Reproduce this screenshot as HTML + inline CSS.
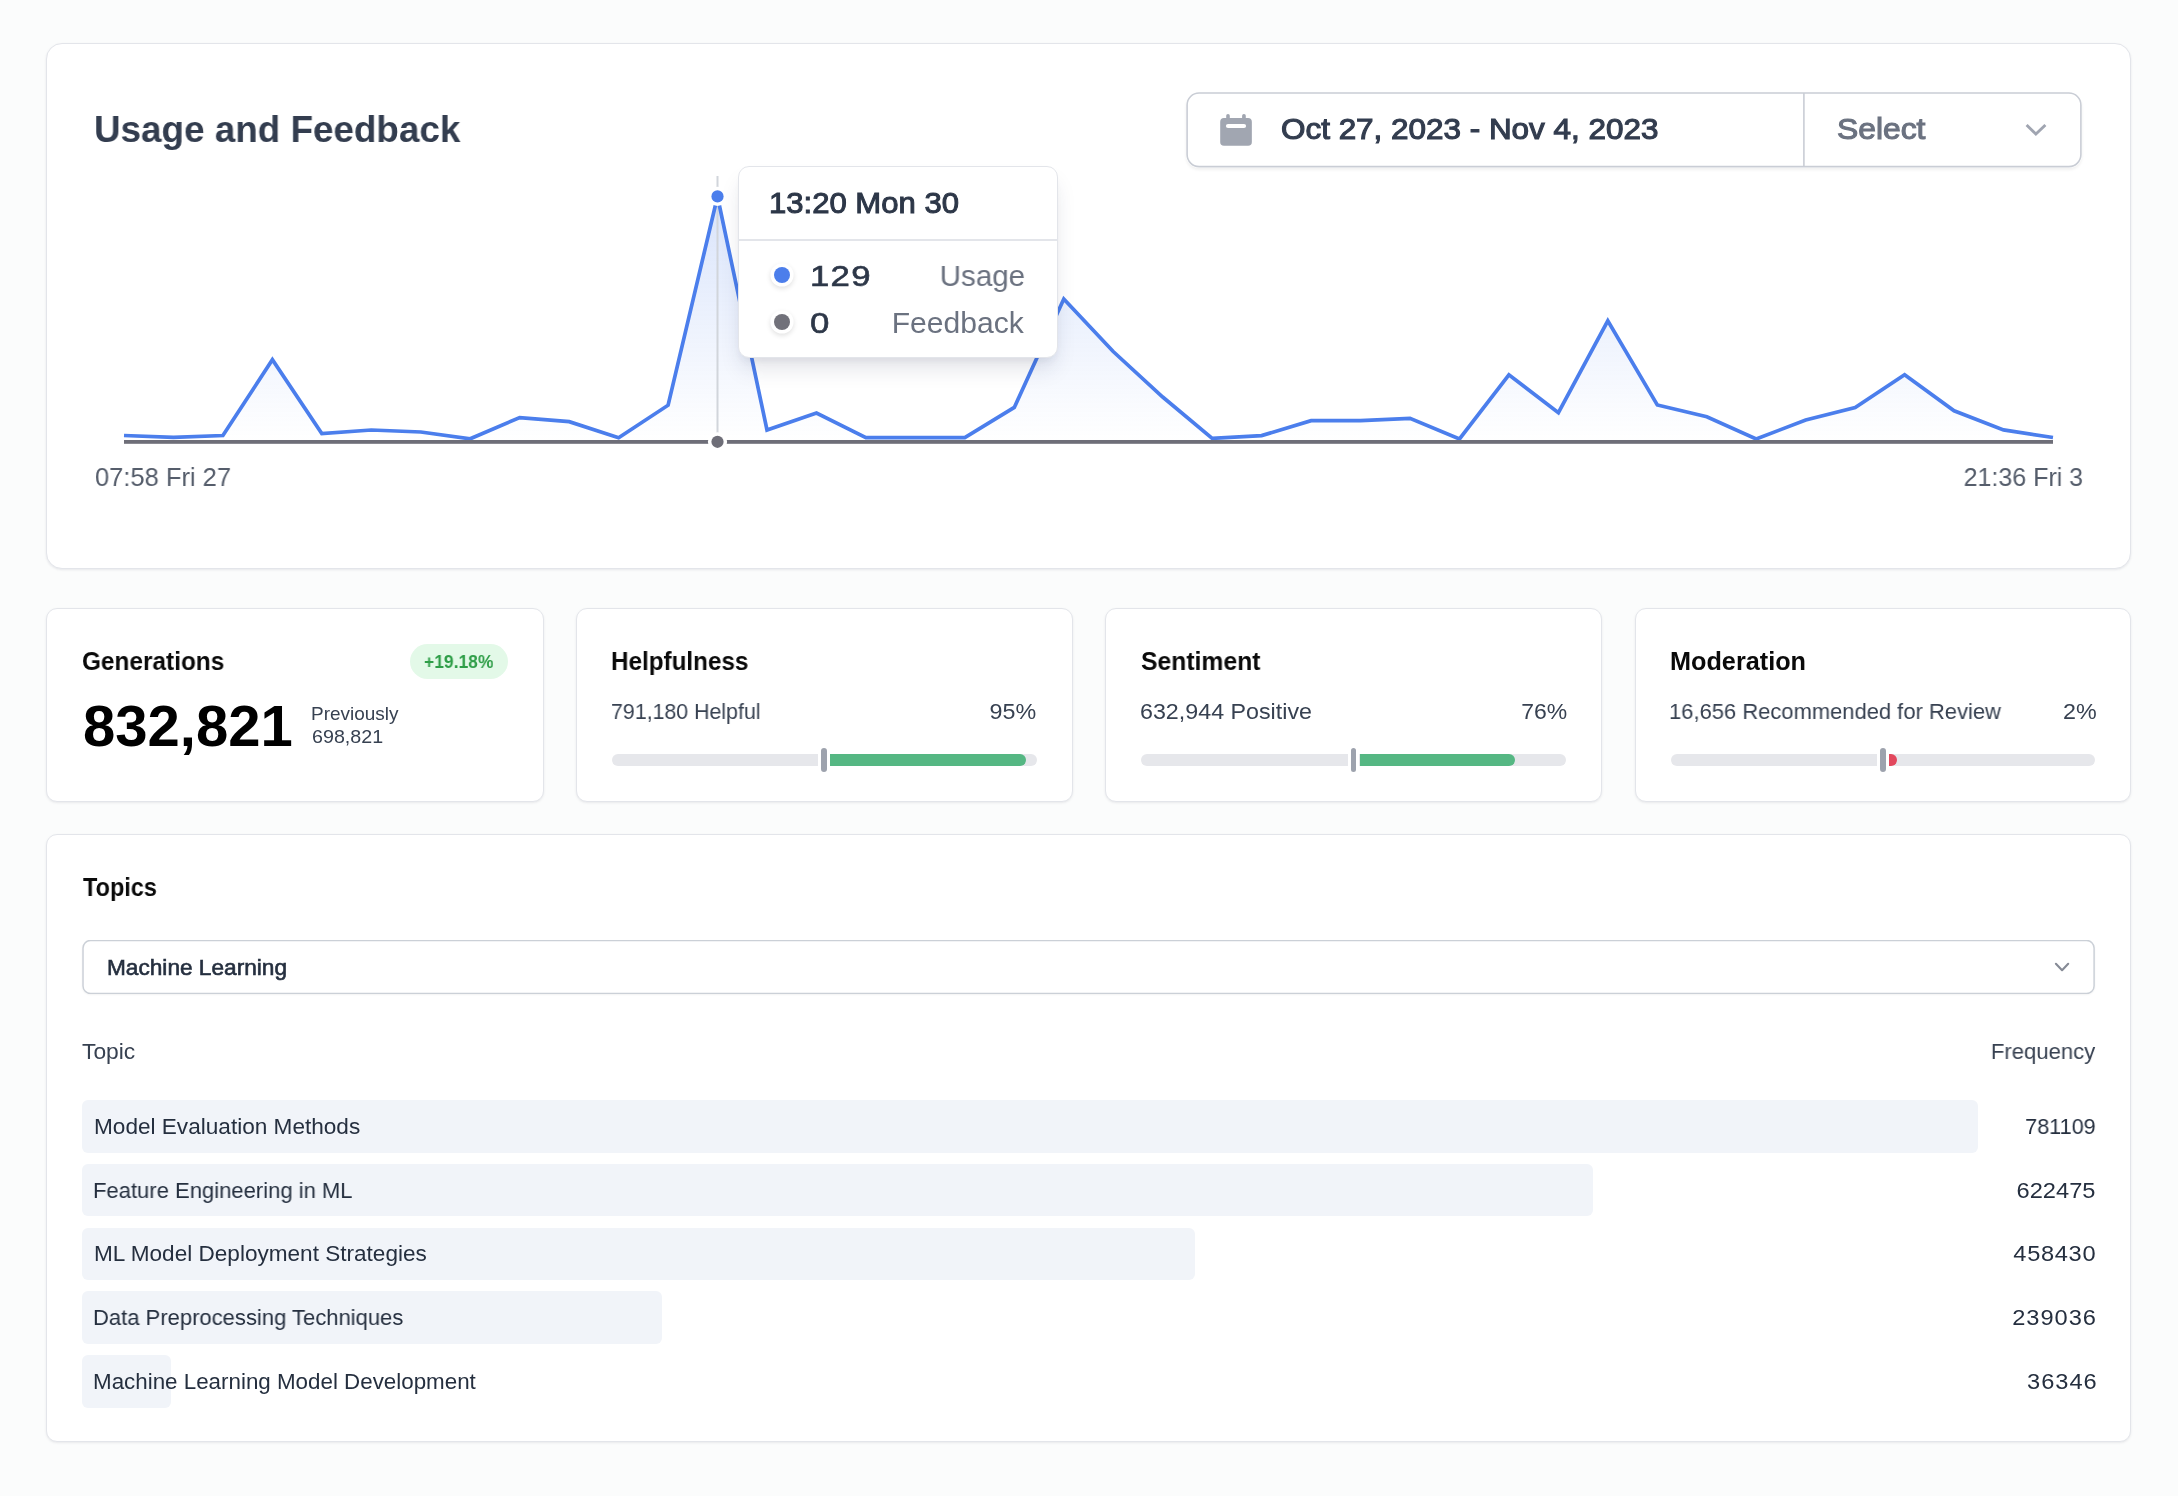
<!DOCTYPE html>
<html lang="en"><head><meta charset="utf-8"><title>Usage and Feedback</title>
<style>
*{box-sizing:border-box;margin:0;padding:0}
html,body{width:2178px;height:1496px;overflow:hidden}
body{background:#fbfcfc;font-family:"Liberation Sans", Arial, Helvetica, sans-serif;position:relative;-webkit-font-smoothing:antialiased}
.t{display:block;will-change:transform}
.in{position:absolute;width:2178px;height:1496px;pointer-events:none}
.card{position:absolute;background:#fff;border:1px solid #e3e5ea;box-shadow:0 1px 3px rgba(30,40,70,.06),0 1px 2px rgba(30,40,70,.035)}
.picker{position:absolute;left:1186px;top:92px;width:896px;height:75.6px;border-radius:13px;background:#fff;box-shadow:0 2px 3px rgba(0,0,0,.06)}
.tooltip{position:absolute;background:#fff;border:1px solid #e3e5ea;border-radius:11px;box-shadow:0 14px 22px -4px rgba(30,40,80,.13),0 5px 8px -3px rgba(30,40,80,.08)}
.tooltip .hr{position:absolute;height:1.6px;background:#e3e5ea}
.dot{position:absolute;width:16px;height:16px;border-radius:50%;box-shadow:0 0 0 3.6px #fff,0 2px 5px 3.6px rgba(0,0,0,.12)}
.badgebg{position:absolute;left:410px;top:644px;width:97.8px;height:34.8px;border-radius:18px;background:#e3f9e8}
.track{position:absolute;top:754.2px;height:11.6px;border-radius:6px;background:#e6e7eb}
.fill{position:absolute;top:754.2px;height:11.6px;border-radius:0 6px 6px 0}
.marker{position:absolute;top:745.4px;width:11.6px;height:29.2px;border:3px solid #fff;border-radius:6px;background:#9da2ad}
.selbox{position:absolute;left:82px;top:940px;width:2013px;height:54px;border-radius:8.5px;background:#fff;box-shadow:0 1px 2px rgba(0,0,0,.05)}
.bar{position:absolute;left:82.4px;height:52.4px;border-radius:6px;background:#f1f4f9}
</style></head>
<body>
<main>
<section class="card" aria-label="Usage and Feedback" style="left:46px;top:43px;width:2085px;height:526px;border-radius:16px"><div class="in" style="left:-47px;top:-44px">
<h1 id="title" class="t" style="position:absolute;top:110.80px;font-size:37.8px;line-height:1;font-weight:700;color:#333d4f;white-space:nowrap;transform:scaleX(0.9743);transform-origin:left center;left:94.27px;">Usage and Feedback</h1>
<svg class="chart" width="2178" height="600" viewBox="0 0 2178 600" style="position:absolute;left:0;top:0;overflow:visible">
<defs><linearGradient id="ag" x1="0" y1="196" x2="0" y2="442" gradientUnits="userSpaceOnUse"><stop offset="0" stop-color="#4b7eec" stop-opacity="0.21"/><stop offset="1" stop-color="#4b7eec" stop-opacity="0"/></linearGradient></defs>
<path d="M124.0,441.8 L124.0,435.5 L173.5,437.4 L222.9,435.5 L272.4,359.7 L321.8,433.5 L371.3,430.0 L420.8,432.0 L470.2,438.8 L519.7,417.6 L569.2,421.7 L618.6,437.7 L668.1,405.2 L717.5,196.5 L767.0,430.0 L816.5,413.0 L865.9,437.7 L915.4,437.7 L964.8,437.7 L1014.3,407.4 L1063.8,299.0 L1113.2,351.5 L1162.7,397.0 L1212.2,438.3 L1261.6,435.6 L1311.1,420.7 L1360.5,420.7 L1410.0,418.4 L1459.5,439.0 L1508.9,374.8 L1558.4,412.7 L1607.8,320.8 L1657.3,405.0 L1706.8,416.8 L1756.2,439.0 L1805.7,420.0 L1855.2,407.6 L1904.6,374.8 L1954.1,410.8 L2003.5,429.9 L2053.0,437.5 L2053.0,441.8 Z" fill="url(#ag)"/>
<line x1="717.5" y1="176" x2="717.5" y2="441" stroke="#d1d5db" stroke-width="2"/>
<polyline points="124.0,435.5 173.5,437.4 222.9,435.5 272.4,359.7 321.8,433.5 371.3,430.0 420.8,432.0 470.2,438.8 519.7,417.6 569.2,421.7 618.6,437.7 668.1,405.2 717.5,196.5 767.0,430.0 816.5,413.0 865.9,437.7 915.4,437.7 964.8,437.7 1014.3,407.4 1063.8,299.0 1113.2,351.5 1162.7,397.0 1212.2,438.3 1261.6,435.6 1311.1,420.7 1360.5,420.7 1410.0,418.4 1459.5,439.0 1508.9,374.8 1558.4,412.7 1607.8,320.8 1657.3,405.0 1706.8,416.8 1756.2,439.0 1805.7,420.0 1855.2,407.6 1904.6,374.8 1954.1,410.8 2003.5,429.9 2053.0,437.5" fill="none" stroke="#4b7eec" stroke-width="3.7" stroke-linejoin="miter" stroke-miterlimit="4"/>
<rect x="124.0" y="440" width="1929.0" height="3.8" fill="#6e6e78"/>
<circle cx="717.5" cy="196.4" r="9.6" fill="#fff"/><circle cx="717.5" cy="196.4" r="6.1" fill="#4b7eec"/>
<circle cx="717.5" cy="441.8" r="9.6" fill="#fff"/><circle cx="717.5" cy="441.8" r="6.1" fill="#6e6e78"/>
</svg>
<span id="xl" class="t" style="position:absolute;top:464.33px;font-size:26.6px;line-height:1;font-weight:400;color:#555d6b;white-space:nowrap;transform:scaleX(0.9584);transform-origin:left center;left:94.79px;">07:58 Fri 27</span>
<span id="xr" class="t" style="position:absolute;top:464.33px;font-size:26.6px;line-height:1;font-weight:400;color:#555d6b;white-space:nowrap;transform:scaleX(0.9402);transform-origin:right center;right:94.69px;">21:36 Fri 3</span>
<div class="picker"><svg width="896" height="76" viewBox="0 0 896 76" style="position:absolute;left:0;top:0"><rect x="1.1" y="1" width="893.8" height="73.6" rx="12" fill="none" stroke="#c9cdd5" stroke-width="1.6"/><line x1="617.9" y1="1" x2="617.9" y2="74.6" stroke="#c9cdd5" stroke-width="1.6"/></svg></div>
<svg style="position:absolute;left:1219px;top:113px" width="35" height="34" viewBox="0 0 35 34"><rect x="7.2" y="1" width="3.6" height="8" rx="1.8" fill="#a1a6b1"/><rect x="23.1" y="1" width="3.7" height="8" rx="1.8" fill="#a1a6b1"/><rect x="1.2" y="5.1" width="31.65" height="27.6" rx="3.8" fill="#a1a6b1"/><rect x="6.9" y="10.9" width="20.2" height="4.2" rx="2.1" fill="#fff"/></svg>
<span id="date" class="t" style="position:absolute;top:114.01px;font-size:30.0px;line-height:1;font-weight:400;color:#333d4f;white-space:nowrap;-webkit-text-stroke:1.15px #333d4f;transform:scaleX(1.0477);transform-origin:left center;left:1280.83px;">Oct 27, 2023 - Nov 4, 2023</span>
<span id="select" class="t" style="position:absolute;top:114.00px;font-size:29.3px;line-height:1;font-weight:400;color:#6b7280;white-space:nowrap;-webkit-text-stroke:1.1px #6b7280;transform:scaleX(1.0858);transform-origin:left center;left:1837.00px;">Select</span>
<svg style="position:absolute;left:2024px;top:121px" width="24" height="18" viewBox="0 0 24 18"><path d="M2.6 3.95 11.9 13 21.4 3.95" fill="none" stroke="#a0a5b1" stroke-width="2.9" stroke-linecap="butt" stroke-linejoin="miter"/></svg>
<div class="tooltip" role="tooltip" style="left:738px;top:166px;width:319.5px;height:192px"><div class="in" style="left:-739px;top:-167px">
<div class="hr" style="left:739px;top:239.3px;width:317.5px"></div>
<p id="tt" class="t" style="position:absolute;top:187.96px;font-size:29.4px;line-height:1;font-weight:400;color:#2d3748;white-space:nowrap;-webkit-text-stroke:1.0px #2d3748;transform:scaleX(1.0567);transform-origin:left center;left:768.72px;">13:20 Mon 30</p>
<div class="dot" style="left:774px;top:267.3px;background:#4c7eeb"></div>
<span id="v129" class="t" style="position:absolute;top:262.15px;font-size:29px;line-height:1;font-weight:400;color:#2d3748;white-space:nowrap;letter-spacing:1.029px;-webkit-text-stroke:0.6px #2d3748;transform:scaleX(1.2000);transform-origin:left center;left:810.16px;">129</span>
<span id="usage" class="t" style="position:absolute;top:260.62px;font-size:29.8px;line-height:1;font-weight:400;color:#6b7280;white-space:nowrap;transform:scaleX(0.9921);transform-origin:right center;right:1153.24px;">Usage</span>
<div class="dot" style="left:774px;top:314.1px;background:#71717a"></div>
<span id="v0" class="t" style="position:absolute;top:308.91px;font-size:29px;line-height:1;font-weight:400;color:#2d3748;white-space:nowrap;-webkit-text-stroke:0.6px #2d3748;transform:scaleX(1.2000);transform-origin:left center;left:810.40px;">0</span>
<span id="feedback" class="t" style="position:absolute;top:307.73px;font-size:29.8px;line-height:1;font-weight:400;color:#6b7280;white-space:nowrap;transform:scaleX(1.0097);transform-origin:right center;right:1153.88px;">Feedback</span>
</div></div>
</div></section>
<div class="stats">
<section class="card" aria-label="Generations" style="left:46px;top:608px;width:498px;height:194px;border-radius:11px"><div class="in" style="left:-47px;top:-609px">
<h2 id="gen" class="t" style="position:absolute;top:648.67px;font-size:25.2px;line-height:1;font-weight:700;color:#0a0a0a;white-space:nowrap;transform:scaleX(0.9681);transform-origin:left center;left:82.40px;">Generations</h2>
<div class="badgebg"></div>
<span id="badge" class="t" style="position:absolute;top:651.68px;font-size:19.1px;line-height:1;font-weight:700;color:#2f9e48;white-space:nowrap;transform:scaleX(0.9141);transform-origin:left center;left:424.07px;">+19.18%</span>
<p id="big" class="t" style="position:absolute;top:697.94px;font-size:57.6px;line-height:1;font-weight:700;color:#000;white-space:nowrap;transform:scaleX(1.0078);transform-origin:left center;left:82.91px;">832,821</p>
<span id="prev" class="t" style="position:absolute;top:705.42px;font-size:18.4px;line-height:1;font-weight:400;color:#374151;white-space:nowrap;transform:scaleX(1.0316);transform-origin:left center;left:311.19px;">Previously</span>
<span id="prevv" class="t" style="position:absolute;top:727.62px;font-size:18.4px;line-height:1;font-weight:400;color:#374151;white-space:nowrap;transform:scaleX(1.0708);transform-origin:left center;left:312.00px;">698,821</span>
</div></section>
<section class="card" aria-label="Helpfulness" style="left:576px;top:608px;width:497px;height:194px;border-radius:11px"><div class="in" style="left:-577px;top:-609px">
<h2 id="help" class="t" style="position:absolute;top:648.67px;font-size:25.2px;line-height:1;font-weight:700;color:#0a0a0a;white-space:nowrap;transform:scaleX(0.9626);transform-origin:left center;left:611.20px;">Helpfulness</h2>
<span id="helpv" class="t" style="position:absolute;top:701.27px;font-size:22.6px;line-height:1;font-weight:400;color:#374151;white-space:nowrap;transform:scaleX(0.9447);transform-origin:left center;left:611.00px;">791,180 Helpful</span>
<span id="helpp" class="t" style="position:absolute;top:701.27px;font-size:22.6px;line-height:1;font-weight:400;color:#374151;white-space:nowrap;transform:scaleX(1.0308);transform-origin:right center;right:1141.33px;">95%</span>
<div class="track" style="left:611.8px;width:424.8px"></div>
<div class="fill" style="left:830.1px;width:195.9px;background:#55b783"></div>
<div class="marker" style="left:818.4px"></div>
</div></section>
<section class="card" aria-label="Sentiment" style="left:1105px;top:608px;width:497px;height:194px;border-radius:11px"><div class="in" style="left:-1106px;top:-609px">
<h2 id="sent" class="t" style="position:absolute;top:648.67px;font-size:25.2px;line-height:1;font-weight:700;color:#0a0a0a;white-space:nowrap;transform:scaleX(0.9815);transform-origin:left center;left:1140.60px;">Sentiment</h2>
<span id="sentv" class="t" style="position:absolute;top:701.27px;font-size:22.6px;line-height:1;font-weight:400;color:#374151;white-space:nowrap;transform:scaleX(1.0293);transform-origin:left center;left:1139.75px;">632,944 Positive</span>
<span id="sentp" class="t" style="position:absolute;top:701.27px;font-size:22.6px;line-height:1;font-weight:400;color:#374151;white-space:nowrap;transform:scaleX(1.0167);transform-origin:right center;right:610.78px;">76%</span>
<div class="track" style="left:1141.3px;width:424.8px"></div>
<div class="fill" style="left:1359.6px;width:155.5px;background:#55b783"></div>
<div class="marker" style="left:1347.9px"></div>
</div></section>
<section class="card" aria-label="Moderation" style="left:1635px;top:608px;width:496px;height:194px;border-radius:11px"><div class="in" style="left:-1636px;top:-609px">
<h2 id="mod" class="t" style="position:absolute;top:648.67px;font-size:25.2px;line-height:1;font-weight:700;color:#0a0a0a;white-space:nowrap;transform:scaleX(1.0020);transform-origin:left center;left:1670.29px;">Moderation</h2>
<span id="modv" class="t" style="position:absolute;top:701.27px;font-size:22.6px;line-height:1;font-weight:400;color:#374151;white-space:nowrap;transform:scaleX(0.9717);transform-origin:left center;left:1669.04px;">16,656 Recommended for Review</span>
<span id="modp" class="t" style="position:absolute;top:701.27px;font-size:22.6px;line-height:1;font-weight:400;color:#374151;white-space:nowrap;transform:scaleX(1.0309);transform-origin:right center;right:81.46px;">2%</span>
<div class="track" style="left:1671.0px;width:424.4px"></div>
<div class="fill" style="left:1889.1px;width:7.6px;background:#e2485d"></div>
<div class="marker" style="left:1877.4px"></div>
</div></section>
</div>
<section class="card" aria-label="Topics" style="left:46px;top:834px;width:2085px;height:608px;border-radius:11px"><div class="in" style="left:-47px;top:-835px">
<h2 id="topics" class="t" style="position:absolute;top:875.47px;font-size:25.2px;line-height:1;font-weight:700;color:#0a0a0a;white-space:nowrap;transform:scaleX(0.9323);transform-origin:left center;left:82.76px;">Topics</h2>
<div class="selbox"><svg width="2013" height="54" viewBox="0 0 2013 54" style="position:absolute;left:0;top:0"><rect x="1" y="0.5" width="2011.1" height="53" rx="7.5" fill="none" stroke="#cbd0d7" stroke-width="1.5"/></svg></div>
<span id="ml" class="t" style="position:absolute;top:956.72px;font-size:21.6px;line-height:1;font-weight:400;color:#252f3f;white-space:nowrap;-webkit-text-stroke:0.6px #252f3f;transform:scaleX(1.0484);transform-origin:left center;left:106.70px;">Machine Learning</span>
<svg style="position:absolute;left:2052px;top:959px" width="20" height="16" viewBox="0 0 20 16"><path d="M3.9 4.8 10.07 11.26 16.2 4.8" fill="none" stroke="#868b96" stroke-width="2.1" stroke-linecap="round" stroke-linejoin="round"/></svg>
<span id="topic" class="t" style="position:absolute;top:1041.15px;font-size:22.5px;line-height:1;font-weight:400;color:#374151;white-space:nowrap;transform:scaleX(1.0133);transform-origin:left center;left:82.44px;">Topic</span>
<span id="freq" class="t" style="position:absolute;top:1040.85px;font-size:22.5px;line-height:1;font-weight:400;color:#374151;white-space:nowrap;transform:scaleX(0.9826);transform-origin:right center;right:82.61px;">Frequency</span>
<div class="bar" style="top:1100.20px;width:1895.3px"></div>
<span id="r0a" class="t" style="position:absolute;top:1115.57px;font-size:22.3px;line-height:1;font-weight:400;color:#252f3f;white-space:nowrap;transform:scaleX(1.0132);transform-origin:left center;left:93.89px;">Model Evaluation Methods</span>
<span id="r0b" class="t" style="position:absolute;top:1115.57px;font-size:22.3px;line-height:1;font-weight:400;color:#252f3f;white-space:nowrap;transform:scaleX(0.9709);transform-origin:right center;right:82.62px;">781109</span>
<div class="bar" style="top:1163.95px;width:1510.4px"></div>
<span id="r1a" class="t" style="position:absolute;top:1179.52px;font-size:22.3px;line-height:1;font-weight:400;color:#252f3f;white-space:nowrap;transform:scaleX(0.9878);transform-origin:left center;left:93.35px;">Feature Engineering in ML</span>
<span id="r1b" class="t" style="position:absolute;top:1179.52px;font-size:22.3px;line-height:1;font-weight:400;color:#252f3f;white-space:nowrap;letter-spacing:0.015px;transform:scaleX(1.0600);transform-origin:right center;right:82.68px;">622475</span>
<div class="bar" style="top:1227.70px;width:1112.3px"></div>
<span id="r2a" class="t" style="position:absolute;top:1243.07px;font-size:22.3px;line-height:1;font-weight:400;color:#252f3f;white-space:nowrap;transform:scaleX(1.0120);transform-origin:left center;left:93.89px;">ML Model Deployment Strategies</span>
<span id="r2b" class="t" style="position:absolute;top:1243.07px;font-size:22.3px;line-height:1;font-weight:400;color:#252f3f;white-space:nowrap;letter-spacing:0.636px;transform:scaleX(1.0600);transform-origin:right center;right:81.96px;">458430</span>
<div class="bar" style="top:1291.45px;width:580.0px"></div>
<span id="r3a" class="t" style="position:absolute;top:1307.42px;font-size:22.3px;line-height:1;font-weight:400;color:#252f3f;white-space:nowrap;transform:scaleX(0.9871);transform-origin:left center;left:93.37px;">Data Preprocessing Techniques</span>
<span id="r3b" class="t" style="position:absolute;top:1307.42px;font-size:22.3px;line-height:1;font-weight:400;color:#252f3f;white-space:nowrap;letter-spacing:0.924px;transform:scaleX(1.0600);transform-origin:right center;right:81.08px;">239036</span>
<div class="bar" style="top:1355.20px;width:88.2px"></div>
<span id="r4a" class="t" style="position:absolute;top:1371.27px;font-size:22.3px;line-height:1;font-weight:400;color:#252f3f;white-space:nowrap;transform:scaleX(1.0028);transform-origin:left center;left:93.24px;">Machine Learning Model Development</span>
<span id="r4b" class="t" style="position:absolute;top:1371.27px;font-size:22.3px;line-height:1;font-weight:400;color:#252f3f;white-space:nowrap;letter-spacing:0.931px;transform:scaleX(1.0600);transform-origin:right center;right:80.83px;">36346</span>

</div></section>
</main>
</body></html>
